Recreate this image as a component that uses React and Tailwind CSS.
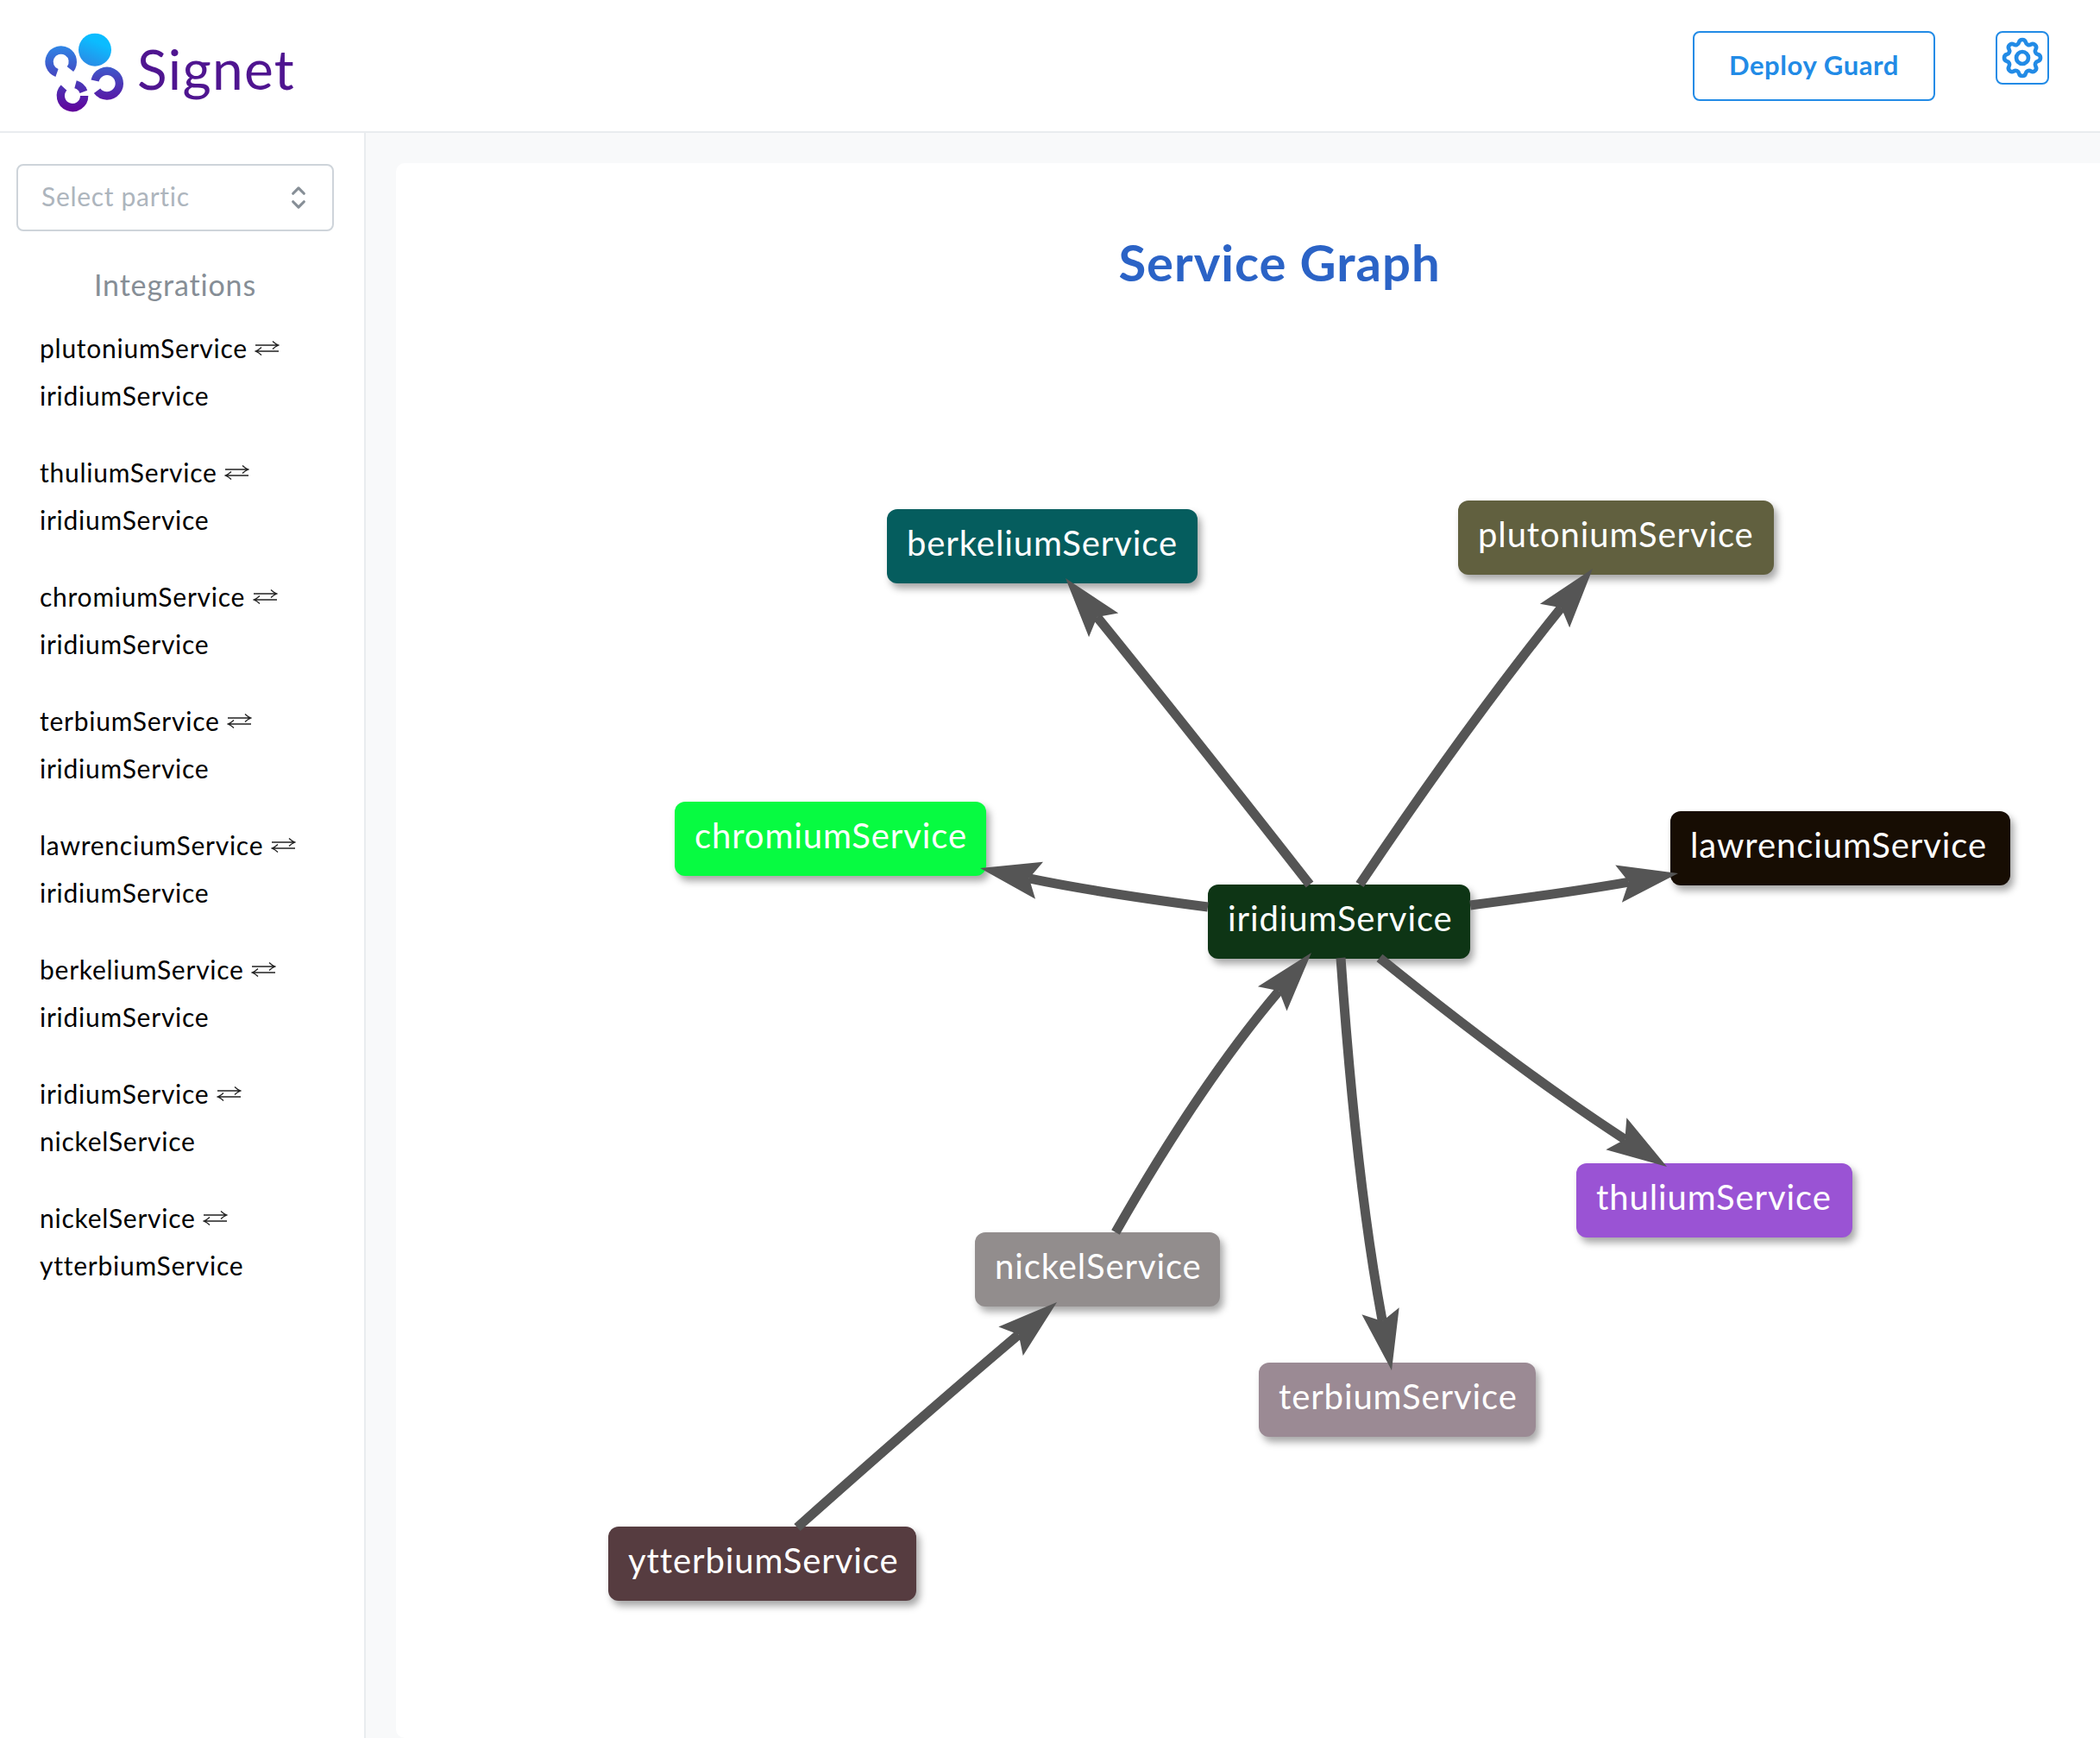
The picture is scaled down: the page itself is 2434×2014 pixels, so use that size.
import React from 'react';
import { TbSettings, TbSelector } from 'react-icons/tb';

const integrations = [
  ['plutoniumService', 'iridiumService'],
  ['thuliumService', 'iridiumService'],
  ['chromiumService', 'iridiumService'],
  ['terbiumService', 'iridiumService'],
  ['lawrenciumService', 'iridiumService'],
  ['berkeliumService', 'iridiumService'],
  ['iridiumService', 'nickelService'],
  ['nickelService', 'ytterbiumService'],
];

const nodes = [
  { name: 'berkeliumService', className: 'left-[569px] top-[401px] w-[360px] bg-[#055d5e]' },
  { name: 'plutoniumService', className: 'left-[1231px] top-[391px] w-[366px] bg-[#61603f]' },
  { name: 'chromiumService', className: 'left-[323px] top-[740px] w-[361px] bg-[#07fb41]' },
  { name: 'lawrenciumService', className: 'left-[1477px] top-[751px] w-[394px] bg-[#170d03]' },
  { name: 'iridiumService', className: 'left-[941px] top-[836px] w-[304px] bg-[#0e3515]' },
  { name: 'thuliumService', className: 'left-[1368px] top-[1159px] w-[320px] bg-[#9a53d4]' },
  { name: 'nickelService', className: 'left-[671px] top-[1239px] w-[284px] bg-[#928d8d]' },
  { name: 'terbiumService', className: 'left-[1000px] top-[1390px] w-[321px] bg-[#9b8a94]' },
  { name: 'ytterbiumService', className: 'left-[246px] top-[1580px] w-[357px] bg-[#563c40]' },
];

// start, control, tip in page coordinates
const edges = [
  [[1518, 1025], [1378, 846], [1235, 670]],
  [[1576, 1025], [1700, 840], [1846, 659]],
  [[1704, 1049], [1820, 1034], [1945, 1012]],
  [[1400, 1051], [1270, 1034], [1136, 1006]],
  [[1599, 1110], [1760, 1240], [1932, 1352]],
  [[1554, 1110], [1572, 1370], [1613, 1588]],
  [[1293, 1428], [1391, 1256], [1520, 1104]],
  [[924, 1770], [1070, 1640], [1225, 1509]],
];

const Edge = ({ points }) => {
  const [s, c, t] = points;
  const dx = t[0] - c[0];
  const dy = t[1] - c[1];
  const len = Math.hypot(dx, dy);
  const ux = dx / len;
  const uy = dy / len;
  const at = (back, side) => `${t[0] - ux * back - uy * side},${t[1] - uy * back + ux * side}`;
  const nx = t[0] - ux * 58;
  const ny = t[1] - uy * 58;
  return (
    <g>
      <path d={`M${s[0]} ${s[1]}Q${c[0]} ${c[1]} ${nx} ${ny}`} fill="none" stroke="#555555" strokeWidth="11" />
      <polygon points={`${at(0, 0)} ${at(70, 22)} ${at(58, 0)} ${at(70, -22)}`} fill="#555555" />
    </g>
  );
};

const arc = (cx, cy, r, from, to) => {
  const rad = (a) => (a * Math.PI) / 180;
  const sweep = ((to - from) % 360 + 360) % 360;
  return `M${cx + r * Math.cos(rad(from))} ${cy + r * Math.sin(rad(from))}A${r} ${r} 0 ${sweep > 180 ? 1 : 0} 1 ${cx + r * Math.cos(rad(to))} ${cy + r * Math.sin(rad(to))}`;
};

const Logo = () => (
  <svg width="110" height="105" viewBox="0 0 330 315" className="shrink-0">
    <defs>
      <linearGradient id="ball" x1="0.35" y1="1" x2="0.65" y2="0.3">
        <stop offset="0" stopColor="#2a8be6" />
        <stop offset="1" stopColor="#0bbcff" />
      </linearGradient>
      <linearGradient id="ring" gradientUnits="userSpaceOnUse" x1="0" y1="70" x2="0" y2="300">
        <stop offset="0" stopColor="#2f86e6" />
        <stop offset="0.55" stopColor="#4a3ab8" />
        <stop offset="1" stopColor="#62009a" />
      </linearGradient>
    </defs>
    <circle cx="198" cy="83" r="57" fill="url(#ball)" />
    <g fill="none" stroke="url(#ring)" strokeWidth="28">
      <path d={arc(80, 125, 41, 110, 38)} />
      <path d={arc(240, 200, 43, 193, 143)} />
      <path d={arc(120, 243, 41, 0, 223)} />
      <path d={arc(120, 243, 41, 285, 340)} />
    </g>
  </svg>
);

const SwapArrows = () => (
  <svg width="29" height="18" viewBox="0 0 29 18" className="inline-block align-[3px]" fill="none" stroke="#222222" strokeWidth="1.3">
    <path d="M1 6H28M21 1.5C23 3.5 25 5 28 6C25 7 23 8.5 21 10.5" />
    <path d="M28 13H1M8 8.5C6 10.5 4 12 1 13C4 14 6 15.5 8 17.5" />
  </svg>
);

export default function App() {
  return (
    <div className="h-[2014px] w-[2434px] overflow-hidden bg-white font-['Lato','Noto_Sans',sans-serif] text-black">
      {/* Header */}
      <header className="flex h-[154px] items-start justify-between border-b-2 border-[#e9ecef] pl-[44px] pr-[59px]">
        <div className="flex items-center gap-[5px] pt-[30px]">
          <Logo />
          <span className="pb-[6px] text-[64px] leading-[99px] tracking-[1.3px] text-[#4f1590]">Signet</span>
        </div>
        <div className="flex items-start gap-[70px] pt-[36px]">
          <button className="flex h-[81px] w-[281px] items-center justify-center rounded-lg border-2 border-[#228be6] pb-[3px] text-[31px] font-bold tracking-[0.6px] text-[#228be6]">
            Deploy Guard
          </button>
          <button className="flex h-[62px] w-[62px] items-center justify-center rounded-lg border-2 border-[#228be6] text-[#228be6]">
            <TbSettings size={56} />
          </button>
        </div>
      </header>

      <div className="flex h-[1860px]">
        {/* Sidebar */}
        <aside className="w-[424px] shrink-0 border-r-2 border-[#e9ecef] pl-[19px] pt-[36px]">
          <div className="flex h-[78px] w-[368px] items-center justify-between rounded-lg border-2 border-[#ced4da] pl-[27px] pr-[20px]">
            <span className="pb-[4px] text-[30px] tracking-[0.7px] text-[#adb5bd]">Select partic</span>
            <TbSelector size={38} className="text-[#868e96]" />
          </div>
          <div className="w-[368px] pt-[37px] text-center text-[34px] leading-[50px] tracking-[0.85px] text-[#868e96]">Integrations</div>
          <div className="flex flex-col gap-[34px] pl-[27px] pt-[21px]">
            {integrations.map(([from, to]) => (
              <div key={from + to} className="w-[340px] text-[30px] leading-[55px] tracking-[0.75px]">
                {from} <SwapArrows /> {to}
              </div>
            ))}
          </div>
        </aside>

        {/* Graph */}
        <main className="min-w-0 flex-1 bg-[#f8f9fa] pl-[35px] pt-[35px]">
          <div className="relative h-[1825px] w-[2048px] rounded-[10px] bg-white pt-[76px]">
            <h1 className="text-center text-[58px] font-bold leading-[78px] tracking-[1px] text-[#2b63c6]">Service Graph</h1>
            {nodes.map((node) => (
              <div
                key={node.name}
                className={`absolute flex h-[86px] items-center rounded-[12px] pb-[8px] pl-[23px] text-[40px] tracking-[0.9px] text-white shadow-[4px_6px_8px_rgba(0,0,0,0.35)] ${node.className}`}
              >
                {node.name}
              </div>
            ))}
            <svg className="absolute left-0 top-0" width="2048" height="1825" viewBox="459 189 2048 1825">
              {edges.map((points, i) => (
                <Edge key={i} points={points} />
              ))}
            </svg>
          </div>
        </main>
      </div>
    </div>
  );
}
